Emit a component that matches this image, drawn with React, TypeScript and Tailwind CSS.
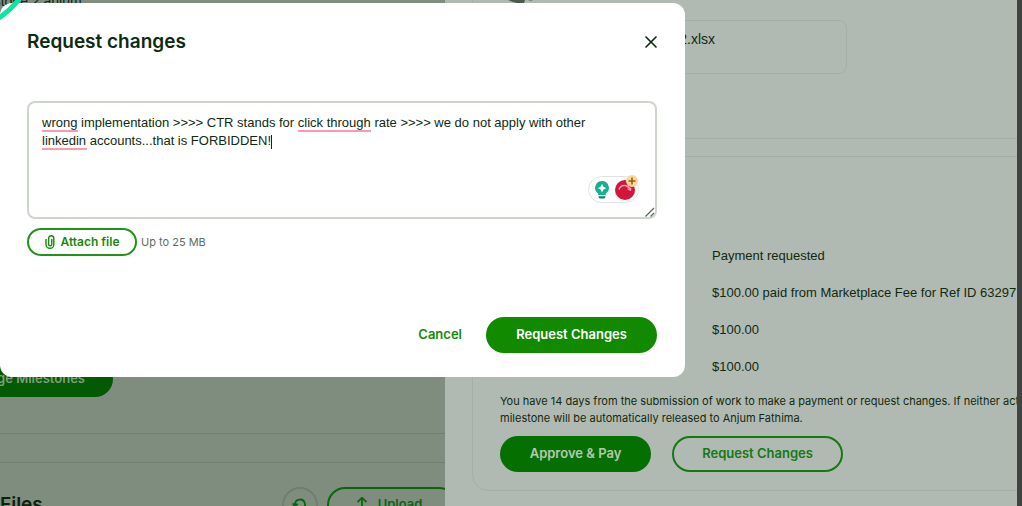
import { useState } from 'react'
import { X } from 'lucide-react'

const payments = [
  'Payment requested',
  '$100.00 paid from Marketplace Fee for Ref ID 632971',
  '$100.00',
  '$100.00',
]

function Milestones() {
  return (
    <main className="w-[445px] shrink-0 overflow-hidden bg-[#7f8d7f]">
      <p className="-ml-8 h-2 text-sm leading-[2px] text-[#0f2410]">Milestone 2 anjum</p>
      <button className="mt-[353px] -ml-20 flex h-9 w-[193px] items-center justify-end rounded-full bg-[#045a02] pr-7 font-['Inter',sans-serif] text-[13px] font-semibold text-[#7f9f7c]">
        Manage Milestones
      </button>
      <hr className="mt-9 border-[#728072]" />
      <hr className="mt-7 border-[#728072]" />
      <div className="mt-6 flex items-center font-['Inter',sans-serif]">
        <h2 className="flex-1 text-[19px] font-semibold text-[#0b230c]">Files</h2>
        <button
          aria-label="Refresh files"
          className="flex size-9 items-center justify-center rounded-full border-2 border-[#6f7e6f] text-[#0d650b]"
        >
          <svg viewBox="0 0 16 16" className="size-4" fill="none" stroke="currentColor" strokeWidth="1.800">
            <path d="M3 9V7.500a5 5 0 1 1 7 4.600M.5 6.500 3 9l2.800-2.300" />
          </svg>
        </button>
        <button className="-mr-3 ml-[9px] flex h-9 w-[130px] shrink-0 items-center justify-center gap-2 rounded-full border-2 border-[#0d650b] pr-2 text-[13px] font-semibold text-[#0d650b]">
          <svg viewBox="0 0 16 16" className="size-4" fill="none" stroke="currentColor" strokeWidth="1.800">
            <path d="M8 15V1M3.500 5.200 8 .7l4.500 4.500" />
          </svg>
          Upload
        </button>
      </div>
    </main>
  )
}

function SubmissionDrawer() {
  return (
    <aside className="min-w-0 flex-1 overflow-hidden bg-[#b1bab2] pl-[27px] text-[#12290f]">
      <section className="h-[139px] border-b border-l border-[#a5afa6] pl-[27px]">
        <svg viewBox="0 0 26 4" className="ml-2 h-1 w-[26px]">
          <path d="M0 0h17l-1 3-5 .5L5 2Z" fill="#4d584e" />
          <path d="M20 0h5l-2 1.500Z" fill="#7b877c" />
        </svg>
        <div className="mt-4 flex h-[54px] w-[347px] justify-end rounded-lg border border-[#a5afa6] pt-2 pr-[131px] text-sm">
          <span className="leading-5">milestone 2.xlsx</span>
        </div>
      </section>

      <section className="-mr-4 mt-[17px] h-[335px] rounded-2xl border border-[#a5afa6] pt-20 pl-[27px]">
        <ul className="pl-[212px] text-[13px] leading-[37px] whitespace-nowrap">
          {payments.map((line, i) => (
            <li key={i}>{line}</li>
          ))}
        </ul>
        <p className="mt-2 font-['Inter',sans-serif] text-[11px] leading-[17px] whitespace-nowrap">
          You have 14 days from the submission of work to make a payment or request changes. If neither action
          <br />
          milestone will be automatically released to Anjum Fathima.
        </p>
        <div className="mt-[9px] flex gap-[21px] font-['Inter',sans-serif] text-[13px] font-semibold">
          <button className="h-9 w-[151px] rounded-full bg-[#066f02] text-[#b5c9b2]">Approve &amp; Pay</button>
          <button className="h-9 w-[171px] rounded-full border-2 border-[#167812] text-[#167812]">
            Request Changes
          </button>
        </div>
      </section>
    </aside>
  )
}

function WritingAssistant() {
  return (
    <div className="absolute right-[18px] bottom-4 flex h-[27px] w-[51px] items-center justify-between rounded-full border border-[#dfe3df] bg-white pr-[3px] pl-1.5">
      <svg viewBox="0 0 14 18" className="h-[18px] w-3.5">
        <path d="M7 0a7 7 0 0 1 3.800 12.800V14H3.200v-1.200A7 7 0 0 1 7 0Z" fill="#13b18f" />
        <path d="M7 2.800 8.400 5.800l3 1.400-3 1.400L7 11.600 5.600 8.600l-3-1.400 3-1.400Z" fill="#fff" />
        <path d="M3.400 15.200h7.200a2.200 2.200 0 0 1-2.200 2.200H5.600a2.200 2.200 0 0 1-2.200-2.200Z" fill="#087f69" />
      </svg>
      <svg viewBox="0 0 20 20" className="size-5">
        <circle cx="10" cy="10" r="10" fill="#d3153b" />
        <path d="M4 9.500C5.500 4.500 12.500 3.500 15.500 10" fill="none" stroke="#f7a5b0" strokeWidth="1.600" />
        <path d="m12.500 8.800 3 1.400.4-2.600" fill="none" stroke="#f7a5b0" strokeWidth="1.200" />
      </svg>
      <svg viewBox="0 0 12 12" className="absolute -top-0.5 right-0 size-3">
        <circle cx="6" cy="6" r="6" fill="#fbd99a" />
        <path d="M6 2.500v7M2.500 6h7" stroke="#96600f" strokeWidth="1.600" />
      </svg>
    </div>
  )
}

function RequestChangesDialog() {
  const [message, setMessage] = useState(
    'wrong implementation >>>> CTR stands for click through rate >>>> we do not apply with other linkedin accounts...that is FORBIDDEN!',
  )

  return (
    <div
      role="dialog"
      aria-labelledby="dialog-title"
      className="absolute top-[3px] left-0 w-[685px] max-w-full rounded-xl bg-white py-6 pr-7 pl-[27px] text-[#0f2a12]"
    >
      <header className="flex h-[30px] items-center justify-between">
        <h1 id="dialog-title" className="font-['Inter',sans-serif] text-[19px] font-semibold">
          Request changes
        </h1>
        <button aria-label="Close" className="-mr-1">
          <X className="size-5" strokeWidth={2} />
        </button>
      </header>

      <div className="relative mt-11 h-[118px]">
        <textarea
          aria-label="Message"
          value={message}
          onChange={(e) => setMessage(e.target.value)}
          spellCheck={false}
          className="block h-full w-full resize-none rounded-lg border-2 border-[#cdd6cc] pt-[11px] pr-10 pl-[13px] text-[13px] leading-[18px] outline-none"
        />
        {/* spelling marks and text cursor */}
        <span className="absolute top-[29px] left-[15px] h-0.5 w-9 bg-[#fb9aae]" />
        <span className="absolute top-[29px] left-[271px] h-0.5 w-[73px] bg-[#fb9aae]" />
        <span className="absolute top-[47px] left-[15px] h-0.5 w-[45px] bg-[#fb9aae]" />
        <span className="absolute top-[34px] left-[244px] h-3.5 w-px bg-[#0f2a12]" />
        <WritingAssistant />
        <svg viewBox="0 0 10 10" className="absolute right-0.5 bottom-0.5 size-2.5 text-[#5b665b]">
          <path d="M.5 9.500 9 1M5.500 9.500 9 6" stroke="currentColor" strokeWidth="1.200" />
        </svg>
      </div>

      <div className="mt-[9px] flex items-center gap-1 font-['Inter',sans-serif]">
        <button className="flex h-7 w-[110px] items-center justify-center gap-1.5 rounded-full border-2 border-[#219315] text-xs font-semibold text-[#148a08]">
          <svg viewBox="0 0 10 14" className="h-3.5 w-2.5" fill="none" stroke="currentColor" strokeWidth="1.400">
            <path d="M6.800 4v5.200a1.600 1.600 0 0 1-3.200 0V3.400a2.600 2.600 0 0 1 5.200 0v6a3.900 3.900 0 0 1-7.800 0V4" />
          </svg>
          Attach file
        </button>
        <span className="text-[11px] text-[#5e6d5f]">Up to 25 MB</span>
      </div>

      <div className="mt-[61px] flex justify-end gap-6 font-['Inter',sans-serif] text-[13px] font-semibold">
        <button className="text-[#148a08]">Cancel</button>
        <button className="h-9 w-[171px] rounded-full bg-[#118a00] text-white">Request Changes</button>
      </div>
    </div>
  )
}

export default function App() {
  return (
    <div className="relative flex h-screen overflow-hidden bg-[#404341] font-['Liberation_Sans',Arial,sans-serif]">
      <Milestones />
      <SubmissionDrawer />
      <div className="w-[5px] shrink-0 bg-[#404341]" />
      <RequestChangesDialog />
      <svg viewBox="0 0 22 20" className="absolute top-0 left-0 h-5 w-[22px]">
        <path d="M-2 18.500Q10 11 21-3" fill="none" stroke="#0ce5a6" strokeWidth="5" />
      </svg>
    </div>
  )
}
